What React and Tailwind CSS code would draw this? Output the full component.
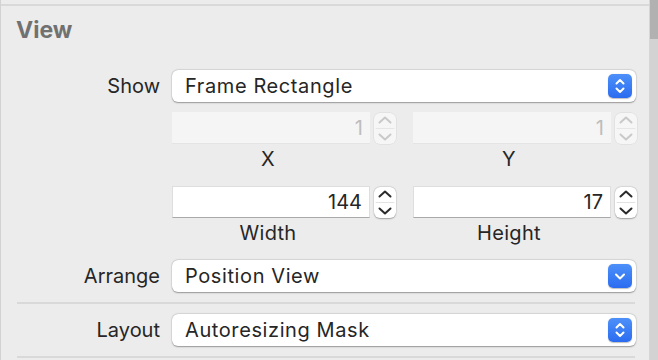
import React from "react";

// small chevron glyphs used in popups and steppers
function PopupArrows({ single }) {
    return (
        <div className="w-[24px] h-[24px] rounded-[5px] bg-gradient-to-b from-[#4d90f9] to-[#2b6cf0] shadow-[0_0.5px_1px_rgba(0,0,0,0.25)] flex items-center justify-center">
            <svg width="24" height="24" viewBox="0 0 24 24" fill="none" stroke="white" strokeWidth="2" strokeLinecap="round" strokeLinejoin="round">
                {single ? (
                    <path d="M8 10.5 L12 14.5 L16 10.5" />
                ) : (
                    <>
                        <path d="M8.5 9.5 L12 6 L15.5 9.5" />
                        <path d="M8.5 14.5 L12 18 L15.5 14.5" />
                    </>
                )}
            </svg>
        </div>
    );
}

function Popup({ label, single }) {
    return (
        <div className="w-[464px] h-[32px] rounded-[6px] bg-white shadow-[0_0.5px_1.5px_rgba(0,0,0,0.35),0_0_0_0.5px_rgba(0,0,0,0.06)] flex items-center justify-between pl-[13px] pr-[4px]">
            <span className="text-[20px] text-[#262626] leading-none tracking-[0.6px]">{label}</span>
            <PopupArrows single={single} />
        </div>
    );
}

function Stepper({ disabled }) {
    const color = disabled ? "#c9c9c9" : "#2a2a2a";
    return (
        <div
            className={
                "w-[22px] h-[31px] rounded-[6px] flex flex-col " +
                (disabled
                    ? "bg-[#f6f6f6] shadow-[0_0_0_0.5px_rgba(0,0,0,0.08)]"
                    : "bg-white shadow-[0_0.5px_1.5px_rgba(0,0,0,0.3),0_0_0_0.5px_rgba(0,0,0,0.06)]")
            }
        >
            <svg width="22" height="31" viewBox="0 0 22 31" fill="none" stroke={color} strokeWidth="2" strokeLinecap="round" strokeLinejoin="round">
                <path d="M5.5 9.5 L11 4.5 L16.5 9.5" />
                <line x1="2" y1="15.5" x2="20" y2="15.5" stroke={disabled ? "#e6e6e6" : "#e2e2e2"} strokeWidth="1" />
                <path d="M5.5 21.5 L11 26.5 L16.5 21.5" />
            </svg>
        </div>
    );
}

function NumberField({ value, disabled }) {
    return (
        <div className="flex items-center gap-[4px]">
            <div
                className={
                    "w-[198px] h-[32px] flex items-center justify-end pr-[7px] text-[20px] leading-none " +
                    (disabled
                        ? "bg-[#f5f5f5] text-[#bdbdbd] border-b border-[#e4e4e4]"
                        : "bg-white text-[#262626] border border-[#dedede] border-b-[#a9a9a9]")
                }
            >
                {value}
            </div>
            <Stepper disabled={disabled} />
        </div>
    );
}

function Row({ label, children }) {
    return (
        <div className="flex items-center">
            <div className="w-[159px] text-right text-[20px] text-[#262626] leading-none">{label}</div>
            <div className="ml-[12px]">{children}</div>
        </div>
    );
}

function FieldPair({ a, b, la, lb, disabled }) {
    return (
        <>
            <div className="flex ml-[171px] gap-[17px]">
                <NumberField value={a} disabled={disabled} />
                <NumberField value={b} disabled={disabled} />
            </div>
            <div className="flex ml-[168px] mt-[3px] gap-[43px] text-[20px] text-[#262626] leading-[24px] tracking-[0.3px]">
                <div className="w-[198px] text-center">{la}</div>
                <div className="w-[198px] text-center">{lb}</div>
            </div>
        </>
    );
}

export default function App() {
    return (
        <div className="w-[658px] h-[360px] flex bg-[#ececec] overflow-hidden font-['Inter',sans-serif]">
            <div className="w-[650px] h-full border-l border-[#d2d2d2] border-r border-r-[#d6d6d6] flex flex-col">
                <div className="mt-[4px] h-[2px] bg-[#d9d9d9]" />
                <div className="mt-[10px] ml-[15px] text-[23px] font-bold text-[#717171] leading-[28px]">View</div>

                <div className="mt-[26px]">
                    <Row label="Show">
                        <Popup label="Frame Rectangle" />
                    </Row>
                </div>

                <div className="mt-[10px]">
                    <FieldPair a="1" b="1" la="X" lb="Y" disabled />
                </div>

                <div className="mt-[15px]">
                    <FieldPair a="144" b="17" la="Width" lb="Height" />
                </div>

                <div className="mt-[15px]">
                    <Row label="Arrange">
                        <Popup label="Position View" single />
                    </Row>
                </div>

                <div className="mt-[10px] ml-[16px] w-[618px] h-[2px] bg-[#d9d9d9]" />

                <div className="mt-[10px]">
                    <Row label="Layout">
                        <Popup label="Autoresizing Mask" />
                    </Row>
                </div>

                <div className="mt-[10px] ml-[16px] w-[618px] h-[2px] bg-[#d9d9d9]" />
            </div>
            <div className="flex-1 flex flex-col">
                <div className="h-[39px] bg-[#b1b1b1]" />
                <div className="flex-1 bg-[#d3d3d3]" />
            </div>
        </div>
    );
}
